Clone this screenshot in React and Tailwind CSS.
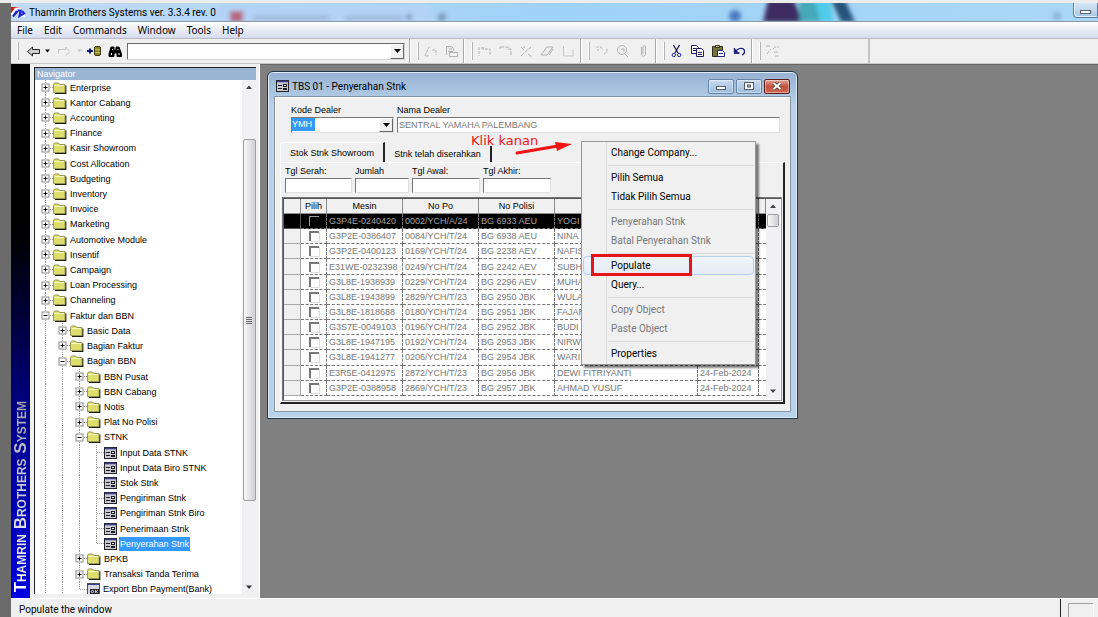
import React from "react";

const ui = "font-['Roboto','Noto_Sans',sans-serif]";
const sans = "font-['Liberation_Sans',sans-serif]";

const menus = ["File", "Edit", "Commands", "Window", "Tools", "Help"];

// [level, type, label]
const tree = [
  [0, "plus", "Enterprise"],
  [0, "plus", "Kantor Cabang"],
  [0, "plus", "Accounting"],
  [0, "plus", "Finance"],
  [0, "plus", "Kasir Showroom"],
  [0, "plus", "Cost Allocation"],
  [0, "plus", "Budgeting"],
  [0, "plus", "Inventory"],
  [0, "plus", "Invoice"],
  [0, "plus", "Marketing"],
  [0, "plus", "Automotive Module"],
  [0, "plus", "Insentif"],
  [0, "plus", "Campaign"],
  [0, "plus", "Loan Processing"],
  [0, "plus", "Channeling"],
  [0, "minus", "Faktur dan BBN"],
  [1, "plus", "Basic Data"],
  [1, "plus", "Bagian Faktur"],
  [1, "minus", "Bagian BBN"],
  [2, "plus", "BBN Pusat"],
  [2, "plus", "BBN Cabang"],
  [2, "plus", "Notis"],
  [2, "plus", "Plat No Polisi"],
  [2, "minus", "STNK"],
  [3, "form", "Input Data STNK"],
  [3, "form", "Input Data Biro STNK"],
  [3, "form", "Stok Stnk"],
  [3, "form", "Pengiriman Stnk"],
  [3, "form", "Pengiriman Stnk Biro"],
  [3, "form", "Penerimaan Stnk"],
  [3, "formLast", "Penyerahan Stnk"],
  [2, "plus", "BPKB"],
  [2, "plus", "Transaksi Tanda Terima"],
  [2, "okLast", "Export Bbn Payment(Bank)"],
];

const rows = [
  ["G3P4E-0240420", "0002/YCH/A/24", "BG 6933 AEU", "YOGI", ""],
  ["G3P2E-0386407", "0084/YCH/T/24", "BG 6938 AEU", "NINA", ""],
  ["G3P2E-0400123", "0169/YCH/T/24", "BG 2238 AEV", "NAFIS", ""],
  ["E31WE-0232398", "0249/YCH/T/24", "BG 2242 AEV", "SUBH", ""],
  ["G3L8E-1938939", "0229/YCH/T/24", "BG 2296 AEV", "MUHA", ""],
  ["G3L8E-1943899", "2829/YCH/T/23", "BG 2950 JBK", "WULA", ""],
  ["G3L8E-1818688", "0180/YCH/T/24", "BG 2951 JBK", "FAJAR", ""],
  ["G3S7E-0049103", "0196/YCH/T/24", "BG 2952 JBK", "BUDI", ""],
  ["G3L8E-1947195", "0192/YCH/T/24", "BG 2953 JBK", "NIRW", ""],
  ["G3L8E-1941277", "0206/YCH/T/24", "BG 2954 JBK", "WARI", ""],
  ["E3R5E-0412975", "2872/YCH/T/23", "BG 2956 JBK", "DEWI FITRIYANTI", "24-Feb-2024"],
  ["G3P2E-0388958", "2869/YCH/T/23", "BG 2957 JBK", "AHMAD YUSUF", "24-Feb-2024"],
];

const contextMenu = [
  [{ label: "Change Company..." }],
  [{ label: "Pilih Semua" }, { label: "Tidak Pilih Semua" }],
  [
    { label: "Penyerahan Stnk", disabled: true },
    { label: "Batal Penyerahan Stnk", disabled: true },
  ],
  [{ label: "Populate", active: true }, { label: "Query..." }],
  [
    { label: "Copy Object", disabled: true },
    { label: "Paste Object", disabled: true },
  ],
  [{ label: "Properties" }],
];

function Folder() {
  return (
    <svg width="14" height="12" viewBox="0 0 14 12" className="shrink-0">
      <path d="M2 11.400h10.700V3.500" fill="none" stroke="#1c1c10" strokeWidth="1.400" />
      <path
        d="M.5 10.500v-8l1-1.500h4l1.200 1.500h5.300v8z"
        fill="#dede6c"
        stroke="#97975a"
      />
      <path d="M1.500 3.500h9.500" stroke="#f7f7c4" />
    </svg>
  );
}

function FormIcon() {
  return (
    <svg width="13" height="12" viewBox="0 0 13 12" className="shrink-0">
      <rect x=".5" y=".5" width="12" height="11" fill="#c9c9cf" stroke="#23232b" />
      <path d="M1 1.500h11" stroke="#3c3c8e" strokeWidth="1.600" />
      <path d="M2 5.500h4M2 8.500h4" stroke="#1c1c24" />
      <rect x="7.500" y="4.500" width="3" height="2" fill="#fff" stroke="#1c1c24" />
      <rect x="7.500" y="8.500" width="3" height="1" fill="#fff" stroke="#1c1c24" />
    </svg>
  );
}

function OkIcon() {
  return (
    <svg width="13" height="12" viewBox="0 0 13 12" className="shrink-0">
      <rect x=".5" y=".5" width="12" height="11" fill="#d6d6dc" stroke="#4c4c55" />
      <path d="M1 1.500h11" stroke="#3a3a9a" />
      <rect x="3" y="6" width="9" height="5" fill="#1c1c24" />
      <circle cx="5.500" cy="8.500" r="1.200" fill="none" stroke="#fff" strokeWidth=".8" />
      <path d="M8.500 7v3M10.800 7 9 8.500l1.800 1.500" fill="none" stroke="#fff" strokeWidth=".8" />
    </svg>
  );
}

function Guide({ kind }) {
  const last = kind === "last";
  return (
    <svg className="h-full w-[17px] shrink-0">
      <line
        x1="9.500" y1="0" x2="9.500" y2={last ? "8" : "100%"}
        stroke="#9a9a9a" strokeDasharray="1 1"
      />
      {kind !== "pass" && (
        <line x1="10" y1="7.500" x2="17" y2="7.500" stroke="#9a9a9a" strokeDasharray="1 1" />
      )}
      {(kind === "plus" || kind === "minus") && (
        <>
          <rect x="6" y="4" width="7" height="7" fill="#fff" stroke="#8a8a8a" />
          <path
            d={kind === "plus" ? "M7.500 7.500h4M9.500 5.500v4" : "M7.500 7.500h4"}
            stroke="#111"
          />
        </>
      )}
    </svg>
  );
}

function TreeRow({ level, type, label }) {
  const leaf = type === "form" || type === "formLast";
  const selected = type === "formLast";
  const own = type.endsWith("Last") ? "last" : leaf ? "tee" : type;
  return (
    <li className="flex min-h-0 items-center overflow-hidden">
      {Array.from({ length: level }, (_, i) => (
        <Guide key={i} kind="pass" />
      ))}
      <Guide kind={own} />
      {leaf ? <FormIcon /> : type === "okLast" ? <OkIcon /> : <Folder />}
      <button
        className={
          selected
            ? "ml-0.5 bg-[#3399ff] px-px leading-[14px] text-white"
            : "ml-0.5 px-px leading-[14px]"
        }
      >
        {label}
      </button>
    </li>
  );
}

function Handle() {
  return (
    <div className="mr-px ml-[7px] h-[18px] w-[2px] border-r border-[#b4b4b4] bg-white" />
  );
}

function ToolGroup({ children }) {
  return (
    <div className="flex h-full items-center border-r border-[#a8a8a8] pr-px shadow-[1px_0_0_#fff]">
      <Handle />
      {children}
    </div>
  );
}

function Tool({ label, color = "#b2b2b2", children }) {
  return (
    <button aria-label={label} className="flex w-[21px] justify-center">
      <svg width="15" height="14" viewBox="0 0 15 14" fill="none" stroke={color}>
        {children}
      </svg>
    </button>
  );
}

function TitleBar() {
  return (
    <header className="relative flex h-[18px] shrink-0 items-center overflow-hidden bg-linear-to-r from-[#c2daf3] via-[#9fd2f8] to-[#a9d7f7]">
      <svg className="absolute inset-0 h-full w-full" aria-hidden="true">
        <defs>
          <filter id="soft" x="-50%" y="-50%" width="200%" height="200%">
            <feGaussianBlur stdDeviation="2" />
          </filter>
        </defs>
        <g filter="url(#soft)">
          <path d="M208 2h210l6 20H200z" fill="#b4d2f6" />
          <rect x="219" y="8" width="13" height="11" fill="#b4667f" />
          <path d="M242 15h76M334 15h58" stroke="#9db5d3" strokeWidth="4" />
          <circle cx="398" cy="14" r="3" fill="#7992b8" />
          <circle cx="431" cy="14" r="4" fill="#7997bc" />
          <circle cx="724" cy="13" r="6" fill="#4c79c0" />
          <path d="M757-3h26l9 22h-40z" fill="#3d2a62" />
          <path d="M788-3h15l9 22h-23z" fill="#45a9b9" />
          <path d="M803-3h16l4 22h-13z" fill="#51cbea" />
          <path d="M820-3h14l10 22h-14z" fill="#27527c" />
          <circle cx="1046" cy="13" r="4" fill="#8cb2d8" />
        </g>
      </svg>
      <svg width="15" height="12" viewBox="0 0 15 12" className="relative shrink-0">
        <path d="M0 1h11v3L4 9 0 7z" fill="#e01616" />
        <path d="M1 9 5 3.500 9 3v6h5" fill="none" stroke="#fff" strokeWidth="3.500" />
        <path d="M2 10.500 6 5M6.500 4.500h3L8.500 10 13 7.500 11 5" fill="none" stroke="#1626d8" strokeWidth="2.200" />
      </svg>
      <h1 className="relative ml-[3px] flex-1 text-[10px] text-black">
        Thamrin Brothers Systems ver. 3.3.4 rev. 0
      </h1>
      <button
        aria-label="Minimize"
        className="relative flex h-[15px] w-[25px] items-center justify-center self-start rounded-bl border border-t-0 border-[#5f7d9a] bg-linear-to-b from-[#d5e7f6] to-[#a7c6e2] shadow-[inset_1px_-1px_0_#e2f0fb]"
      >
        <span className="mt-1 h-[4px] w-[11px] border border-[#5a6470] bg-white" />
      </button>
    </header>
  );
}

function Toolbar() {
  return (
    <div className="flex h-[26px] shrink-0 items-center border-y border-t-[#b9b9c2] border-b-[#c8c8c8] bg-[#f0f0f0]">
      <div className="flex h-full items-center border-r border-[#a8a8a8] pr-1 shadow-[1px_0_0_#fff]">
        <div className="mr-[4px] ml-[6px] h-[18px] w-[2px] border-r border-[#b4b4b4] bg-white" />
        <Tool label="Back" color="#222">
          <path d="M1.500 7.500 6.500 3v2.500h7v4h-7V12z" fill="#d0d0d0" />
        </Tool>
        <svg width="10" height="14" viewBox="0 0 10 14">
          <path d="M1 5.500h5L3.500 8.500z" fill="#111" />
        </svg>
        <Tool label="Forward" color="#c4c4c4">
          <path d="M12.500 7.500 8.500 3v2.500h-7v4M8.500 12l4-4" />
        </Tool>
        <svg width="9" height="14" viewBox="0 0 9 14">
          <path d="M2 5.500h5L4.500 8z" fill="#c4c4c4" />
        </svg>
        <Tool label="Retrieve" color="#14147a">
          <path d="M0 7h6M3 4.500v5" strokeWidth="2" />
          <rect x="7.500" y="2.500" width="6" height="9" rx="1.500" fill="#8a8428" stroke="#3c3a10" />
          <path d="M8 5.500h5M8 8.500h5" stroke="#c9c25a" />
        </Tool>
        <Tool label="Find" color="#000">
          <path d="M3 3h3v3h2V3h3l2.500 7v2.500H9V9H6v3.500H1V10z" fill="#000" />
          <path d="M3.500 9v2M11 9v2M4.500 5v1M10 5v1" stroke="#fff" />
        </Tool>
        <div className="relative ml-px h-[17px] w-[278px] border border-t-[#6a6a6a] border-r-[#d8d8d8] border-b-[#d8d8d8] border-l-[#6a6a6a] bg-white">
          <select aria-label="Address" className="h-full w-full appearance-none text-[10px]" />
          <DropArrow />
        </div>
      </div>
      <ToolGroup>
        <Tool label="New">
          <path d="M2 12 6 3h2M9 6h4v5M3 12h3" strokeDasharray="3 1" />
        </Tool>
        <Tool label="Open">
          <path d="M2.500 11V2.500h5l2 2V7M5 5h3M5.500 8.500h8v4h-8z M4 7.500h5" />
        </Tool>
      </ToolGroup>
      <ToolGroup>
        <Tool label="Insert row">
          <path d="M2 3v9M4 4h3M6 3v3M8 5h5v7" strokeDasharray="3 1" />
        </Tool>
        <Tool label="Append row">
          <path d="M2 3h8v2h3v7M2 3v2" strokeDasharray="4 1" />
        </Tool>
        <Tool label="Delete row">
          <path d="M2 12 12 3M2 3l3 3M9 10l4 3M4 3h2" strokeDasharray="4 1" />
        </Tool>
        <Tool label="Erase">
          <path d="M1 11 7 3h6L7 11H1M13 5l-4 6" />
        </Tool>
        <Tool label="Page">
          <path d="M2.500 2v10H12V6" stroke="#c6c6c6" />
        </Tool>
      </ToolGroup>
      <ToolGroup>
        <Tool label="Save">
          <path d="M2 3h5l2 3M10 10l3-2V4M4 5v2" strokeDasharray="3 1" />
        </Tool>
        <Tool label="Preview">
          <circle cx="7" cy="6" r="4.500" />
          <path d="M6 5h3v3M9 9l4 4" />
        </Tool>
        <Tool label="Attach">
          <path d="M5.500 3v7c0 3 4 3 4 0V3c0-2-2.500-2-2.500 0v7" />
        </Tool>
      </ToolGroup>
      <ToolGroup>
        <Tool label="Cut" color="#1d1d52">
          <path d="M4.500 1 9 9M10.500 1 6 9" strokeWidth="1.300" />
          <circle cx="4.800" cy="11" r="1.700" stroke="#23239a" />
          <circle cx="10.200" cy="11" r="1.700" stroke="#23239a" />
        </Tool>
        <Tool label="Copy" color="#1e1e66">
          <path d="M1.500 1.500h5l2 2v6h-7z" fill="#fff" />
          <path d="M6.500 4.500h5l2 2v6h-7z" fill="#fff" />
          <path d="M3 4.500h3M3 6.500h3M8 8.500h4M8 10.500h4" />
        </Tool>
        <Tool label="Paste" color="#2e2e1a">
          <path d="M1.500 2.500h10v10h-10z" fill="#77733c" />
          <path d="M4.500 1.500h4v2h-4z" fill="#d8d489" />
          <path d="M6.500 6.500h5l2 2v4h-7z" fill="#fff" stroke="#23239a" />
          <path d="M8 9.500h4" stroke="#23239a" />
        </Tool>
        <Tool label="Undo" color="#1c1c7c">
          <path d="M2.500 4v5h5M3 8.500C6 3.500 12.500 3 12.500 7.500c0 2-1 3-2.500 3.500" strokeWidth="1.300" />
          <path d="M2 4v5.500h5.500z" fill="#1c1c7c" stroke="none" />
        </Tool>
      </ToolGroup>
      <div className="flex h-full w-[118px] items-center border-r-2 border-[#c4c4c4]">
        <Handle />
        <Tool label="Exit">
          <path d="M1 2h4M2 10l4-5M8 5l2-2h4M9 8h4M10 12h4" strokeDasharray="4 1" />
        </Tool>
      </div>
    </div>
  );
}

function DropArrow() {
  return (
    <span className="pointer-events-none absolute inset-y-0 right-0 flex w-[14px] items-center justify-center border border-t-white border-r-[#666] border-b-[#666] border-l-white bg-[#f0f0f0]">
      <svg width="7" height="4" viewBox="0 0 7 4">
        <path d="M0 0h7L3.500 4z" fill="#000" />
      </svg>
    </span>
  );
}

function Navigator() {
  return (
    <aside className="flex w-[230px] shrink-0 flex-col border-r border-white bg-[#f0f0f0] pt-[3px] pr-[3px] pb-1 pl-1">
      <div className="flex min-h-0 flex-1 flex-col border-t border-l border-[#222] bg-white">
        <h2 className={`h-3 shrink-0 bg-[#9ab4d3] pl-0.5 text-[9px] leading-3 text-white ${sans}`}>
          Navigator
        </h2>
        <div className="flex min-h-0 flex-1">
          <div className="min-w-0 flex-1 overflow-hidden">
            <ul className={`grid h-[517px] auto-rows-fr pl-px text-[9px] whitespace-nowrap text-black ${sans}`}>
              {tree.map(([level, type, label]) => (
                <TreeRow key={label} level={level} type={type} label={label} />
              ))}
            </ul>
          </div>
          <div className="flex w-[14px] flex-col items-center bg-[#f1f1f3]">
            <svg width="14" height="59" viewBox="0 0 14 59" className="shrink-0">
              <path d="M4 9h6L7 5.500z" fill="#444" />
            </svg>
            <div className="flex w-[13px] flex-1 flex-col items-center justify-center gap-px rounded-xs border border-[#a0a0a4] bg-linear-to-r from-[#f8f8f8] to-[#cfcfd4]">
              <i className="h-px w-[6px] bg-[#666]" />
              <i className="h-px w-[6px] bg-[#666]" />
              <i className="h-px w-[6px] bg-[#666]" />
              <i className="h-px w-[6px] bg-[#666]" />
            </div>
            <svg width="14" height="93" viewBox="0 0 14 93" className="shrink-0">
              <path d="M4 84.500h6L7 88z" fill="#333" />
            </svg>
          </div>
        </div>
      </div>
    </aside>
  );
}

const inset =
  "border border-t-[#777] border-r-[#e0e0e0] border-b-[#e0e0e0] border-l-[#777] bg-white";

function Field({ id, label, width }) {
  return (
    <div className={`flex flex-col ${width}`}>
      <label htmlFor={id} className="leading-[14px]">
        {label}
      </label>
      <input id={id} className={`h-[15px] w-full ${inset}`} />
    </div>
  );
}

function StnkTable() {
  const head = "border-r border-b border-[#8c8c8c] bg-[#f0f0f0] p-0 font-normal text-black";
  return (
    <div className="flex border border-t-[#777] border-r-[#999] border-b-[#999] border-l-[#777] bg-white p-px shadow-[inset_1px_1px_0_#555]">
      <div className="min-w-0 flex-1 pb-[3px]">
        <table className="h-[197px] w-full table-fixed border-separate border-spacing-0 text-[9px] leading-[14px] text-[#777]">
          <colgroup>
            <col className="w-[17px]" />
            <col className="w-[26px]" />
            <col className="w-[76px]" />
            <col className="w-[76px]" />
            <col className="w-[76px]" />
            <col className="w-[143px]" />
            <col className="w-[61px]" />
            <col />
          </colgroup>
          <thead>
            <tr>
              <th className={head} />
              <th className={head}>Pilih</th>
              <th className={head}>Mesin</th>
              <th className={head}>No Po</th>
              <th className={head}>No Polisi</th>
              <th className={head} />
              <th className={head} />
              <th className={head} />
            </tr>
          </thead>
          <tbody>
            {rows.map((row, i) => (
              <tr key={row[0]} className={i === 0 ? "bg-black text-[#a4a4a4]" : ""}>
                <td
                  className={
                    i === 0
                      ? "border-r border-b border-[#555] p-0"
                      : "border-r border-b border-[#a8a8a8] bg-[#f0f0f0] p-0"
                  }
                />
                <td className="border-r border-b border-dashed border-[#777] p-0">
                  <input
                    type="checkbox"
                    aria-label={`Pilih ${row[0]}`}
                    className={
                      i === 0
                        ? "mx-auto block size-[10px] appearance-none border-t border-l border-[#999]"
                        : "mx-auto block size-[10px] appearance-none border-t-2 border-l-2 border-[#777] shadow-[1px_1px_0_#ddd]"
                    }
                  />
                </td>
                {row.map((cell, j) => (
                  <td
                    key={j}
                    className="border-r border-b border-dashed border-[#777] p-0 pl-[2px] whitespace-nowrap"
                  >
                    {cell}
                  </td>
                ))}
                <td className="border-b border-dashed border-[#777] p-0" />
              </tr>
            ))}
          </tbody>
        </table>
      </div>
      <div className="flex w-[14px] flex-col items-center justify-between bg-[#f1f1f3]">
        <div className="flex flex-col items-center">
          <svg width="14" height="15" viewBox="0 0 14 15">
            <path d="M4 9h6L7 5.500z" fill="#444" />
          </svg>
          <div className="h-[13px] w-[12px] rounded-xs border border-[#a0a0a4] bg-linear-to-r from-[#f8f8f8] to-[#cfcfd4]" />
        </div>
        <svg width="14" height="16" viewBox="0 0 14 16">
          <path d="M4 6.500h6L7 10z" fill="#444" />
        </svg>
      </div>
    </div>
  );
}

function ChildWindow() {
  const caption =
    "flex h-[15px] items-center justify-center rounded-xs border shadow-[inset_0_0_0_1px_rgba(255,255,255,0.4)]";
  return (
    <section className="absolute top-[6px] left-[7px] w-[531px] rounded-t-md border border-[#1f3a4c] bg-linear-to-b from-[#97b2d2] via-[#b9d1ea] via-10% to-[#b7d2ea] p-[6px] pt-0 shadow-[inset_0_0_0_1px_#dcebf8]">
      <div className="flex h-[24px] items-center pt-[4px] pr-px pl-[2px]">
        <FormIcon />
        <h2 className="ml-[3px] flex-1 text-[10px] text-black">TBS 01 - Penyerahan Stnk</h2>
        <div className="flex gap-[2px]">
          <button aria-label="Minimize window" className={`${caption} w-[26px] border-[#6684a5] bg-linear-to-b from-[#c9dbef] to-[#9dbbdb]`}>
            <span className="mt-[3px] h-[4px] w-[10px] border border-[#55606c] bg-white" />
          </button>
          <button aria-label="Maximize window" className={`${caption} w-[26px] border-[#6684a5] bg-linear-to-b from-[#c9dbef] to-[#9dbbdb]`}>
            <svg width="10" height="8" viewBox="0 0 10 8">
              <rect x=".5" y=".5" width="9" height="7" fill="#fff" stroke="#55606c" />
              <rect x="3.500" y="3" width="3" height="2" fill="#9dbbdb" stroke="#55606c" />
            </svg>
          </button>
          <button aria-label="Close window" className={`${caption} w-[26px] border-[#5b1d1d] bg-linear-to-b from-[#e2a596] via-[#c4503f] to-[#cf6a50]`}>
            <svg width="10" height="8" viewBox="0 0 10 8">
              <path d="M1.500 1l7 6M8.500 1l-7 6" stroke="#4c3a3c" strokeWidth="3.500" />
              <path d="M1.500 1l7 6M8.500 1l-7 6" stroke="#fff" strokeWidth="2" />
            </svg>
          </button>
        </div>
      </div>
      <div className={`border border-[#8796a6] bg-[#f0f0f0] px-[5px] pt-[6px] pb-[7px] text-[9px] text-black shadow-[inset_1px_1px_0_#fff] ${sans}`}>
        <div className="flex gap-[3px] pr-[5px] pl-[11px]">
          <div className="w-[103px]">
            <label htmlFor="kode" className="block leading-[14px]">
              Kode Dealer
            </label>
            <div className={`relative h-[16px] ${inset}`}>
              <select id="kode" className="block h-[13px] w-[23px] appearance-none bg-[#3399ff] leading-[13px] text-white">
                <option>YMH</option>
              </select>
              <DropArrow />
            </div>
          </div>
          <div className="flex-1">
            <label htmlFor="nama" className="block leading-[14px]">
              Nama Dealer
            </label>
            <input
              id="nama"
              readOnly
              defaultValue="SENTRAL YAMAHA PALEMBANG"
              className={`block h-[16px] w-full pl-px text-[#777] ${inset}`}
            />
          </div>
        </div>
        <div role="tablist" className="mt-[9px] flex items-end whitespace-nowrap">
          <button role="tab" aria-selected="true" className="h-[20px] w-[105px] rounded-tl-sm border-t border-r-2 border-l border-t-white border-r-[#222] border-l-white leading-[18px]">
            Stok Stnk Showroom
          </button>
          <button role="tab" aria-selected="false" className="h-[16px] w-[107px] border-r-2 border-[#222] leading-4">
            Stnk telah diserahkan
          </button>
        </div>
        <div className="border-t border-r-2 border-b-2 border-l border-t-white border-r-[#222] border-b-[#222] border-l-white px-px pt-px pb-px">
          <div className="mb-[4px] flex gap-[3px] pl-[3px]">
            <Field id="serah" label="Tgl Serah:" width="w-[67px]" />
            <Field id="jumlah" label="Jumlah" width="w-[54px]" />
            <Field id="awal" label="Tgl Awal:" width="w-[68px]" />
            <Field id="akhir" label="Tgl Akhir:" width="w-[68px]" />
          </div>
          <StnkTable />
        </div>
      </div>
    </section>
  );
}

function ContextMenu() {
  return (
    <div
      role="menu"
      className="absolute top-[76px] left-[321px] w-[175px] border border-[#979797] bg-[#f0f0f0] bg-[linear-gradient(#dcdcdc,#dcdcdc)] bg-[length:1px_100%] bg-[position:24px_0] bg-no-repeat p-px text-[10px] shadow-[3px_3px_2px_rgba(0,0,0,0.5)]"
    >
      {contextMenu.map((group, g) => (
        <React.Fragment key={g}>
          {g > 0 && (
            <div role="separator" className="ml-[25px] flex h-[6px] items-center">
              <div className="h-px w-full bg-[#d9d9d9]" />
            </div>
          )}
          {group.map((item) => (
            <button
              key={item.label}
              role="menuitem"
              disabled={item.disabled}
              className={
                item.active
                  ? "block h-[19px] w-full rounded-sm border border-[#b5cfec] bg-linear-to-b from-[#f0f4f9] to-[#e4ecf6] pl-[27px] text-left leading-[18px] text-black"
                  : "block h-[19px] w-full pl-[28px] text-left leading-5 text-black disabled:text-[#777]"
              }
            >
              {item.label}
            </button>
          ))}
        </React.Fragment>
      ))}
    </div>
  );
}

function Annotations() {
  return (
    <>
      <p className="absolute top-[68px] left-[211px] font-['DejaVu_Sans',sans-serif] text-[13px] leading-4 text-[#f01414]">
        Klik kanan
      </p>
      <svg width="60" height="16" viewBox="0 0 60 16" className="absolute top-[75px] left-[254px]">
        <path d="M3 13 44 6" stroke="#f01414" strokeWidth="3" strokeLinecap="round" />
        <path d="M41 2l17 2-15 7z" fill="#f01414" />
      </svg>
      <div className="pointer-events-none absolute top-[189px] left-[331px] h-[22px] w-[101px] border-3 border-[#e8141c]" />
    </>
  );
}

export default function App() {
  return (
    <div className={`flex h-screen flex-col overflow-hidden bg-[#6b6b6b] ${ui}`}>
      <div className="h-[3px] shrink-0 bg-[#ececec]" />
      <div className="flex min-h-0 flex-1 flex-col pl-[11px]">
        <TitleBar />
        <nav className="flex h-[17px] shrink-0 items-center gap-[11px] border-t border-[#8d99a8] bg-linear-to-b from-white to-[#d5dbed] pl-1.5 font-['Noto_Sans',sans-serif] text-[10px] text-black">
          {menus.map((m) => (
            <button key={m}>{m}</button>
          ))}
        </nav>
        <Toolbar />
        <main className="flex min-h-0 flex-1">
          <div className="flex w-[19px] shrink-0 items-end justify-center bg-linear-to-b from-black from-25% via-[#000088] via-65% to-[#0000e0] pb-1.5">
            <div className="rotate-180 bg-linear-to-b from-white to-[#a4a4b2] bg-clip-text font-['Liberation_Sans',sans-serif] text-[17px] leading-[19px] font-bold whitespace-nowrap text-transparent [font-variant:small-caps] [writing-mode:vertical-rl]">
              Thamrin Brothers System
            </div>
          </div>
          <Navigator />
          <div className="relative min-w-0 flex-1 overflow-hidden border-t border-[#666] bg-[#808080]">
            <ChildWindow />
            <ContextMenu />
            <Annotations />
          </div>
        </main>
        <footer className="flex h-[19px] shrink-0 border-t border-white bg-[#f0f0f0] text-[10px] text-black">
          <span className="flex-1 self-center pt-[3px] pl-2">Populate the window</span>
          <span className="mr-[7px] w-px bg-[#222]" />
          <span className="mt-[4px] mr-[4px] w-[26px] border border-b-0 border-t-[#a0a0a0] border-r-white border-l-[#a0a0a0]" />
        </footer>
      </div>
    </div>
  );
}
